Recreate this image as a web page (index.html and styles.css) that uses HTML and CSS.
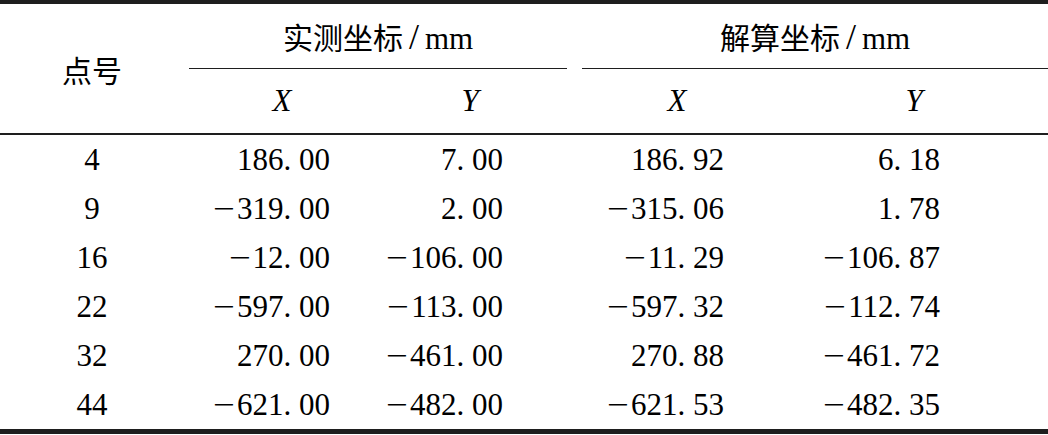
FILE: index.html
```html
<!DOCTYPE html>
<html>
<head>
    <meta charset="UTF-8">
    <title>坐标对比</title>
    <link rel="stylesheet" href="styles.css">
</head>
<body>
    <table class="coord-table">
        <colgroup>
            <col class="c-id">
            <col class="c-x">
            <col class="c-y">
            <col class="c-x2">
            <col class="c-y2">
        </colgroup>
        <thead>
            <tr>
                <th rowspan="2" class="id-head"><span class="cjk">点号</span></th>
                <th colspan="2" class="group"><span class="group-title first"><span class="cjk">实测坐标</span><span class="slash">/</span>mm</span></th>
                <th colspan="2" class="group"><span class="group-title second"><span class="cjk">解算坐标</span><span class="slash">/</span>mm</span></th>
            </tr>
            <tr class="axis-row">
                <th class="axis">X</th>
                <th class="axis axis-y">Y</th>
                <th class="axis">X</th>
                <th class="axis axis-y2">Y</th>
            </tr>
        </thead>
        <tbody>
            <tr>
                <td class="id">4</td>
                <td class="num n1">186. 00</td>
                <td class="num n2">7. 00</td>
                <td class="num n3">186. 92</td>
                <td class="num n4">6. 18</td>
            </tr>
            <tr>
                <td class="id">9</td>
                <td class="num n1"><span class="sign">−</span>319. 00</td>
                <td class="num n2">2. 00</td>
                <td class="num n3"><span class="sign">−</span>315. 06</td>
                <td class="num n4">1. 78</td>
            </tr>
            <tr>
                <td class="id">16</td>
                <td class="num n1"><span class="sign">−</span>12. 00</td>
                <td class="num n2"><span class="sign">−</span>106. 00</td>
                <td class="num n3"><span class="sign">−</span>11. 29</td>
                <td class="num n4"><span class="sign">−</span>106. 87</td>
            </tr>
            <tr>
                <td class="id">22</td>
                <td class="num n1"><span class="sign">−</span>597. 00</td>
                <td class="num n2"><span class="sign">−</span>113. 00</td>
                <td class="num n3"><span class="sign">−</span>597. 32</td>
                <td class="num n4"><span class="sign">−</span>112. 74</td>
            </tr>
            <tr>
                <td class="id">32</td>
                <td class="num n1">270. 00</td>
                <td class="num n2"><span class="sign">−</span>461. 00</td>
                <td class="num n3">270. 88</td>
                <td class="num n4"><span class="sign">−</span>461. 72</td>
            </tr>
            <tr>
                <td class="id">44</td>
                <td class="num n1"><span class="sign">−</span>621. 00</td>
                <td class="num n2"><span class="sign">−</span>482. 00</td>
                <td class="num n3"><span class="sign">−</span>621. 53</td>
                <td class="num n4"><span class="sign">−</span>482. 35</td>
            </tr>
        </tbody>
    </table>
</body>
</html>
```

FILE: styles.css
```css
body {
    background-color: #ffffff;
    color: #000000;
    font-family: "Liberation Serif", "Times New Roman", serif;
    margin: 0;
    padding: 0;
}

.coord-table {
    width: 1048px;
    border-collapse: collapse;
    table-layout: fixed;
    border-top: 4px solid #1e1e1e;
    border-bottom: 5px solid #1e1e1e;
    font-family: "Liberation Serif", "Times New Roman", serif;
    font-size: 31px;
}

.cjk {
    font-family: "Noto Sans CJK SC", sans-serif;
    font-size: 30px;
}

.slash {
    display: inline-block;
    width: 22px;
    text-align: center;
    font-size: 36px;
}

.sign {
    display: inline-block;
    width: 24px;
    text-align: left;
    transform: scaleX(1.25);
    transform-origin: left center;
}

.c-id { width: 184px; }
.c-x { width: 196px; }
.c-y { width: 196px; }
.c-x2 { width: 202px; }
.c-y2 { width: 270px; }

th {
    font-weight: normal;
    padding: 0;
}

.id-head {
    text-align: center;
    vertical-align: middle;
    border-bottom: 2px solid #1e1e1e;
}

.group {
    text-align: center;
}

.group-title {
    display: block;
    height: 64px;
    line-height: 64px;
    border-bottom: 1px solid #1e1e1e;
}

.group-title.first {
    margin: 0 9px 0 5px;
}

.group-title.second {
    margin: 0 0 0 6px;
}

.axis-row th {
    height: 64px;
    border-bottom: 2px solid #1e1e1e;
}

.axis {
    font-style: italic;
    text-align: center;
}

.axis-y {
    padding-right: 16px;
}

.axis-y2 {
    padding-left: 2px;
}

td {
    height: 49px;
    padding: 0;
    white-space: nowrap;
}

.id {
    text-align: center;
}

.num {
    text-align: right;
}

.n1 { padding-right: 50px; }
.n2 { padding-right: 73px; }
.n3 { padding-right: 54px; }
.n4 { padding-right: 108px; }
```
